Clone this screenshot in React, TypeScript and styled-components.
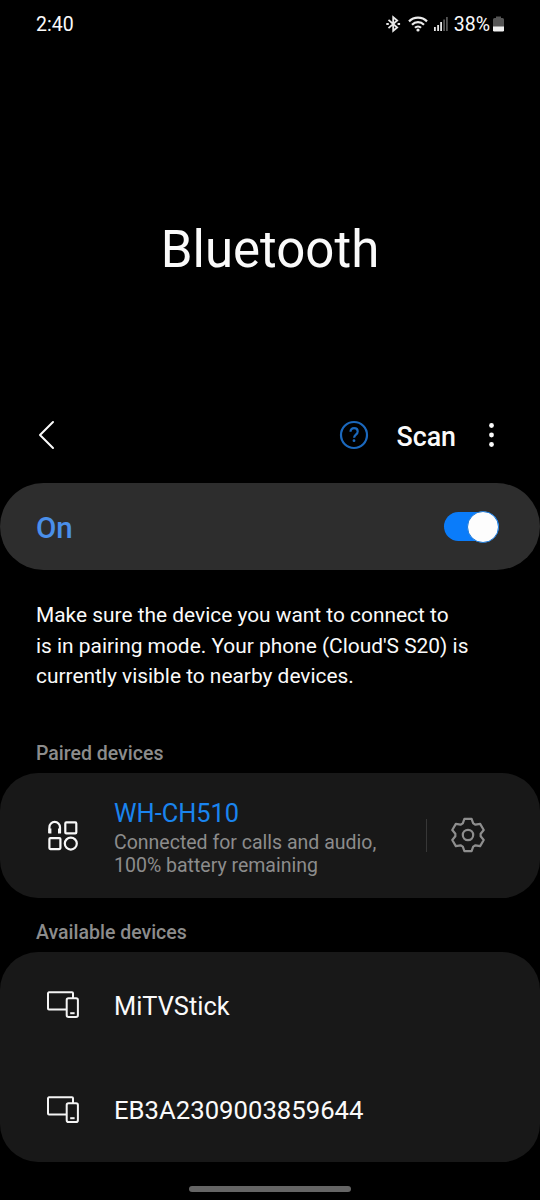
import React from "react";
import styled, { createGlobalStyle } from "styled-components";

const GlobalStyle = createGlobalStyle`
  * { box-sizing: border-box; }
  body { margin: 0; background: #000; }
`;

const Screen = styled.main`
  display: flex;
  flex-direction: column;
  width: 540px;
  height: 1200px;
  overflow: hidden;
  background: #000;
  color: #fafafa;
  font-family: Roboto, sans-serif;
`;

const Label = styled.span<{
  $size: number;
  $weight?: number;
  $color?: string;
  $line?: number;
}>`
  display: block;
  white-space: nowrap;
  font-size: ${(p) => p.$size}px;
  font-weight: ${(p) => p.$weight ?? 400};
  color: ${(p) => p.$color ?? "#fafafa"};
  line-height: ${(p) => (p.$line ? `${p.$line}px` : "normal")};
`;

const StatusBar = styled.header`
  display: flex;
  align-items: center;
  justify-content: space-between;
  height: 48px;
  padding: 0 36px;
`;

const StatusIcons = styled.div`
  display: flex;
  align-items: center;
`;

const WifiIcon = styled.svg`
  margin-left: 7px;
`;

const SignalIcon = styled.svg`
  margin: 0 6px;
`;

const BatteryIcon = styled.svg`
  margin-left: 3px;
`;

const Hero = styled.div`
  display: flex;
  align-items: center;
  justify-content: center;
  height: 339px;
  padding-top: 65px;
`;

const HeroTitle = styled.h1`
  margin: 0;
  font-size: 51px;
  font-weight: 400;
  line-height: 60px;
`;

const Toolbar = styled.nav`
  display: flex;
  align-items: center;
  height: 96px;
  padding: 0 46px 0 36px;
`;

const ToolbarActions = styled.div`
  display: flex;
  align-items: center;
  margin-left: auto;
`;

const ScanButton = styled.div`
  margin: 4px 32px 0 27px;
`;

const SwitchRow = styled.section`
  display: flex;
  align-items: center;
  justify-content: space-between;
  height: 87px;
  padding: 0 40px 0 36px;
  border-radius: 43.5px;
  background: #2d2d2d;
`;

const SwitchLabel = styled.div`
  padding-top: 2px;
`;

const Track = styled.div`
  display: flex;
  align-items: center;
  justify-content: flex-end;
  width: 55px;
  height: 29px;
  margin-right: 1px;
  border-radius: 15px;
  background: #0a7cfa;
`;

const Thumb = styled.div`
  flex: none;
  width: 32px;
  height: 32px;
  border: 1px solid #1a78d8;
  border-radius: 50%;
  background: #fdfdfd;
`;

const Notice = styled.div`
  height: 163px;
  padding: 30px 36px 0;
`;

const SectionHeading = styled.h2<{ $height: number }>`
  display: flex;
  align-items: flex-end;
  height: ${(p) => p.$height}px;
  margin: 0;
  padding: 0 36px 8px;
`;

const Card = styled.section`
  border-radius: 38px;
  background: #181818;
`;

const DeviceRow = styled.div<{ $height: number }>`
  display: flex;
  align-items: center;
  height: ${(p) => p.$height}px;
  padding: 0 54px 0 46px;
`;

const DeviceIcon = styled.svg`
  flex: none;
  margin-right: 34px;
`;

const DeviceText = styled.div<{ $top: number }>`
  padding-top: ${(p) => p.$top}px;
`;

const Divider = styled.div`
  width: 1px;
  height: 33px;
  margin: 0 23px 0 auto;
  background: #373737;
`;

const GearIcon = styled.svg`
  margin-bottom: 2px;
`;

const HomeBar = styled.div`
  width: 162px;
  height: 6px;
  margin: 24px auto 0;
  border-radius: 3px;
  background: #656565;
`;

const gearPoints = Array.from({ length: 6 }, (_, tooth) => {
  const angle = (tooth * Math.PI) / 3;
  return [[-5.2, -11.6], [-3.6, -16.1], [3.6, -16.1], [5.2, -11.6]]
    .map(([x, y]) =>
      [
        (x * Math.cos(angle) - y * Math.sin(angle)).toFixed(2),
        (x * Math.sin(angle) + y * Math.cos(angle)).toFixed(2),
      ].join(","),
    )
    .join(" ");
}).join(" ");

const ScreensIcon = () => (
  <DeviceIcon width="34" height="30" viewBox="0 0 34 30" fill="none" stroke="#f4f4f4" strokeWidth="2">
    <path d="M20 19.6H3a1 1 0 0 1-1-1V3.300a1 1 0 0 1 1-1h23a1 1 0 0 1 1 1V8" />
    <rect x="20.700" y="8.200" width="11.200" height="18.800" rx="1.800" />
    <path d="M24.200 23.200h4.400" />
  </DeviceIcon>
);

export default function App() {
  return (
    <Screen>
      <GlobalStyle />
      <StatusBar>
        <Label $size={19.5}>2:40</Label>
        <StatusIcons>
          <svg width="15" height="18" viewBox="0 0 15 18" fill="none" stroke="#e8e8e8" strokeWidth="1.800">
            <path d="M2.500 4.800 11.200 12.500 7.200 15.800V2.200l4 3.300L2.500 13.200" />
            <path d="M.3 9h2.500M11.600 9h2.500" strokeWidth="2.200" />
          </svg>
          <WifiIcon width="20" height="16" viewBox="0 0 20 16" fill="none" stroke="#ececec" strokeWidth="2.200">
            <path d="M1 5.400a12.800 12.800 0 0 1 18 0M4 8.700a8.500 8.500 0 0 1 12 0M7 11.800a4.300 4.300 0 0 1 6 0" />
            <circle cx="10" cy="14" r="1.600" fill="#ececec" stroke="none" />
          </WifiIcon>
          <SignalIcon width="14" height="16" viewBox="0 0 14 16">
            <path fill="#e8e8e8" d="M0 11h1.800v4H0zM3.200 9H5v6H3.200zM6.200 6H8v9H6.200z" />
            <path fill="#555" d="M9.200 3.500H11V15H9.200zM12 1h1.800v14H12z" />
          </SignalIcon>
          <Label $size={19.5}>38%</Label>
          <BatteryIcon width="11" height="16" viewBox="0 0 11 16">
            <path fill="#555" d="M3 .5h5V2h1.500Q11 2 11 3.500V11H0V3.500Q0 2 1.500 2H3z" />
            <path fill="#f0f0f0" d="M0 10.500h11v3.800q0 1.200-1.200 1.200H1.200Q0 15.500 0 14.300z" />
          </BatteryIcon>
        </StatusIcons>
      </StatusBar>

      <Hero>
        <HeroTitle>Bluetooth</HeroTitle>
      </Hero>

      <Toolbar>
        <svg width="22" height="32" viewBox="0 0 22 32" fill="none" stroke="#fafafa" strokeWidth="2" strokeLinecap="round" strokeLinejoin="round">
          <path d="M17 3 4 16l13 13" />
        </svg>
        <ToolbarActions>
          <svg width="30" height="30" viewBox="0 0 30 30" fill="none" stroke="#1b68bd" strokeWidth="2.200">
            <circle cx="15" cy="15" r="13" />
            <path d="M11.500 11.700c0-2.300 1.500-3.600 3.600-3.600s3.600 1.300 3.600 3.300c0 3.200-3.600 3.100-3.600 6.300" />
            <circle cx="15" cy="20.700" r="1.400" fill="#1b68bd" stroke="none" />
          </svg>
          <ScanButton>
            <Label $size={26.8} $weight={500}>Scan</Label>
          </ScanButton>
          <svg width="6" height="26" viewBox="0 0 6 26" fill="#fafafa">
            <circle cx="3.500" cy="3.500" r="2.400" />
            <circle cx="3.500" cy="13" r="2.400" />
            <circle cx="3.500" cy="22.500" r="2.400" />
          </svg>
        </ToolbarActions>
      </Toolbar>

      <SwitchRow>
        <SwitchLabel>
          <Label $size={29.5} $weight={500} $color="#4a8fea">On</Label>
        </SwitchLabel>
        <Track>
          <Thumb />
        </Track>
      </SwitchRow>

      <Notice>
        <Label $size={20.9} $line={30.5}>Make sure the device you want to connect to</Label>
        <Label $size={20.9} $line={30.5}>is in pairing mode. Your phone (Cloud'S S20) is</Label>
        <Label $size={20.9} $line={30.5}>currently visible to nearby devices.</Label>
      </Notice>

      <SectionHeading $height={40}>
        <Label $size={19.5} $weight={500} $color="#8c8c8c">Paired devices</Label>
      </SectionHeading>
      <Card>
        <DeviceRow $height={125}>
          <DeviceIcon width="34" height="34" viewBox="0 0 34 34" fill="none" stroke="#f8f8f8" strokeWidth="2.200">
            <path d="M3.400 14V8.200a5.300 5.300 0 0 1 10.600 0V14" />
            <path d="M3.900 9.500v5M13.500 9.500v5" strokeWidth="3" />
            <rect x="19.300" y="3.400" width="11" height="11" rx="1" />
            <rect x="3.400" y="19.100" width="11" height="11" rx="1" />
            <circle cx="24.800" cy="24.600" r="6" />
          </DeviceIcon>
          <DeviceText $top={3}>
            <Label $size={25.4} $line={31} $color="#1a84ee">WH-CH510</Label>
            <DeviceText $top={2}>
              <Label $size={19.5} $line={23} $color="#8c8c8c">Connected for calls and audio,</Label>
              <Label $size={19.5} $line={23} $color="#8c8c8c">100% battery remaining</Label>
            </DeviceText>
          </DeviceText>
          <Divider />
          <GearIcon width="36" height="36" viewBox="-18 -18 36 36" fill="none" stroke="#8e8e8e" strokeWidth="2.200" strokeLinejoin="round">
            <polygon points={gearPoints} />
            <circle r="5.200" />
          </GearIcon>
        </DeviceRow>
      </Card>

      <SectionHeading $height={54}>
        <Label $size={19.5} $weight={500} $color="#8c8c8c">Available devices</Label>
      </SectionHeading>
      <Card>
        <DeviceRow $height={105}>
          <ScreensIcon />
          <DeviceText $top={3}>
            <Label $size={25.4}>MiTVStick</Label>
          </DeviceText>
        </DeviceRow>
        <DeviceRow $height={105}>
          <ScreensIcon />
          <DeviceText $top={1}>
            <Label $size={25.7}>EB3A2309003859644</Label>
          </DeviceText>
        </DeviceRow>
      </Card>
      <HomeBar />
    </Screen>
  );
}
